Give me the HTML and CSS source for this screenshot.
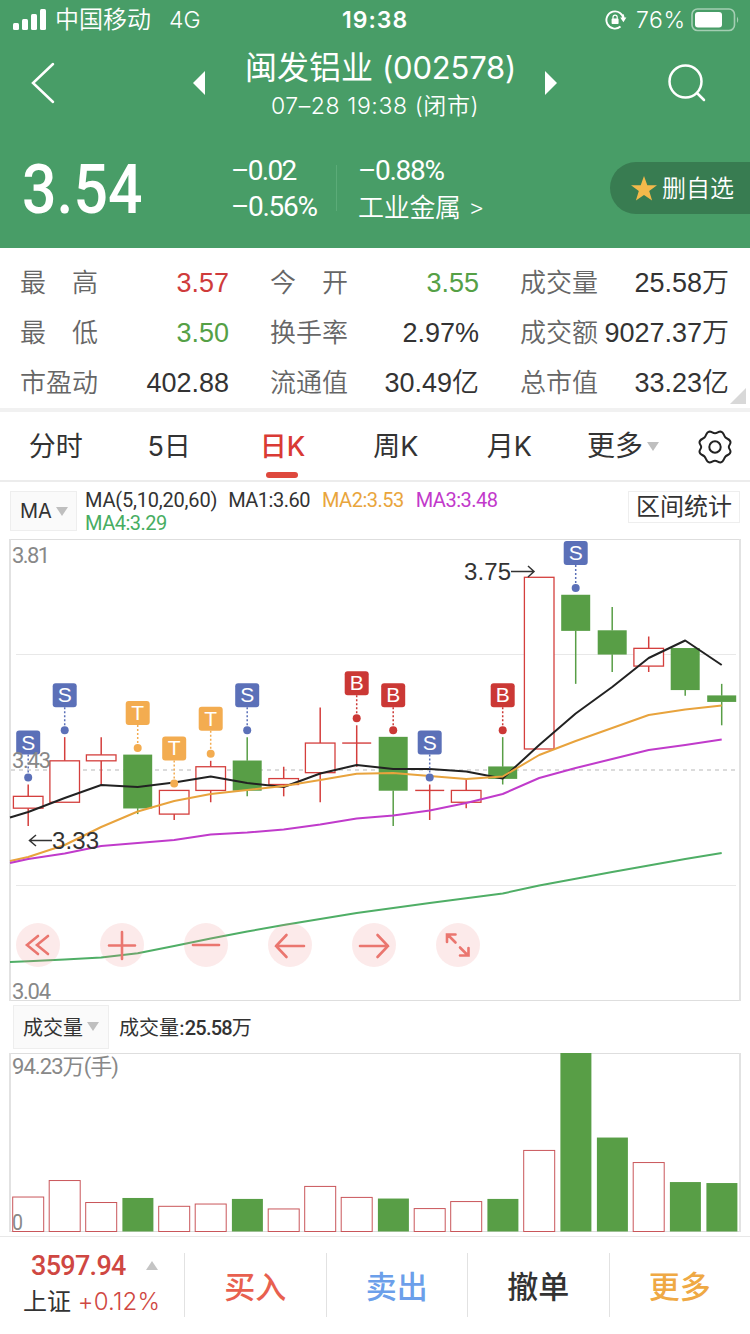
FILE: index.html
```html
<!DOCTYPE html>
<html lang="zh-CN">

<head>
    <meta charset="UTF-8">
    <title>闽发铝业 (002578)</title>
    <link rel="stylesheet" href="styles.css">
</head>

<body>

    <div class="header">
        <div class="status">
            <svg class="signal" width="34" height="22" viewBox="0 0 34 22">
                <rect x="0" y="14" width="6" height="7" rx="1.5"/>
                <rect x="9" y="10" width="6" height="11" rx="1.5"/>
                <rect x="18" y="5" width="6" height="16" rx="1.5"/>
                <rect x="27" y="0" width="6" height="21" rx="1.5"/>
            </svg>
            <span class="carrier">中国移动</span>
            <span class="net">4G</span>
            <span class="time">19:38</span>
            <svg class="lock" width="22" height="22" viewBox="0 0 22 22">
                <path d="M18.6 10.5A8.6 8.6 0 1 0 15.5 17.6M17.6 5.5A8.6 8.6 0 0 1 18.6 10.5" fill="none" stroke="#fff" stroke-width="1.9"/>
                <path d="M15.2 8.6h6.2l-3 4.6z"/>
                <rect x="6.6" y="9.6" width="7" height="5.4" rx=".8"/>
                <path d="M8 10V8.2a2.1 2.1 0 0 1 4.2 0V10" fill="none" stroke="#fff" stroke-width="1.2"/>
            </svg>
            <span class="percent">76%</span>
            <svg class="battery" width="50" height="24" viewBox="0 0 50 24">
                <rect x="1" y="1" width="42.5" height="21.5" rx="5.5" fill="none" stroke="#fff" stroke-opacity=".5" stroke-width="1.6"/>
                <rect x="4" y="4" width="27" height="15.5" rx="3"/>
                <path d="M46 8.5q2.5 3.3 0 6.6z" opacity=".5"/>
            </svg>
        </div>

        <div class="nav">
            <svg class="back" width="24" height="42" viewBox="0 0 24 42"><path d="M22 2L2 21L22 40" fill="none" stroke="#fff" stroke-width="2.5" stroke-linecap="round"/></svg>
            <svg class="prev" width="12" height="24" viewBox="0 0 12 24"><path d="M12 0v24L0 12z"/></svg>
            <div class="title">
                <h1>闽发铝业 <span>(002578)</span></h1>
                <p>07–28 19:38 (闭市)</p>
            </div>
            <svg class="next" width="12" height="24" viewBox="0 0 12 24"><path d="M0 0v24L12 12z"/></svg>
            <svg class="search" width="38" height="38" viewBox="0 0 38 38"><path d="M29 29l7 7M33.5 17.5a16 16 0 1 1-32 0a16 16 0 1 1 32 0z" fill="none" stroke="#fff" stroke-width="2.5" stroke-linecap="round"/></svg>
        </div>

        <div class="quote">
            <div class="price">3.54</div>
            <div class="change">
                <p>–0.02</p>
                <p>–0.56%</p>
            </div>
            <div class="industry">
                <p class="num">–0.88%</p>
                <p class="name">工业金属 <span>&gt;</span></p>
            </div>
            <div class="fav">
                <svg width="26" height="25" viewBox="0 0 26 25"><path d="M13 0l3.3 9.2h9.7l-7.8 5.9 2.9 9.4L13 18.9l-8.1 5.6 2.9-9.4L0 9.2h9.7z" fill="#f3b94b"/></svg>
                <span>删自选</span>
            </div>
        </div>
    </div>

    <div class="stats">
        <div><label>最　高</label><b class="up">3.57</b></div>
        <div><label>今　开</label><b class="down">3.55</b></div>
        <div><label>成交量</label><b>25.58万</b></div>
        <div><label>最　低</label><b class="down">3.50</b></div>
        <div><label>换手率</label><b>2.97%</b></div>
        <div><label>成交额</label><b>9027.37万</b></div>
        <div><label>市盈动</label><b>402.88</b></div>
        <div><label>流通值</label><b>30.49亿</b></div>
        <div><label>总市值</label><b>33.23亿</b></div>
        <i class="corner"></i>
    </div>

    <div class="tabs">
        <div>分时</div>
        <div>5日</div>
        <div class="active">日K</div>
        <div>周K</div>
        <div>月K</div>
        <div class="more">更多<i class="caret"></i></div>
        <svg class="gear" width="34" height="34" viewBox="-17 -17 34 34">
            <circle r="5.7"/>
            <path d="M-5.5-15.500C-3-15.500-2.500-13.700 0-13.700S3-15.500 5.500-15.500C9-15 8.500-11.500 10.500-9.500S15.500-8 15.500-4.500C15.500-2.500 13.800-2 13.800 0S15.500 2.500 15.500 4.500C15.500 8 12.500 7.500 10.500 9.500S9 15 5.500 15.500C3 15.500 2.500 13.700 0 13.700S-3 15.500-5.500 15.500C-9 15-8.500 11.500-10.500 9.500S-15.500 8-15.500 4.500C-15.500 2.500-13.800 2-13.800 0S-15.500-2.500-15.500-4.500C-15.500-8-12.500-7.500-10.500-9.500S-9-15-5.500-15.500Z"/>
        </svg>
    </div>

    <div class="ma">
        <div class="select">MA<i class="caret"></i></div>
        <p>
            <span class="m0">MA(5,10,20,60)</span><span class="m1">MA1:3.60</span><span class="m2">MA2:3.53</span><span class="m3">MA3:3.48</span><br><span class="m4">MA4:3.29</span>
        </p>
        <div class="range">区间统计</div>
    </div>

    <div class="chart">
        <svg id="kline" width="750" height="464" viewBox="0 538 750 464"></svg>
        <div class="tools">
            <svg viewBox="-22 -22 44 44"><path d="M0-9L-11 0L0 9M10-9L-1 0L10 9"/></svg>
            <svg viewBox="-22 -22 44 44"><path d="M-13 .5H13M0-13V14"/></svg>
            <svg viewBox="-22 -22 44 44"><path d="M-13 0H13"/></svg>
            <svg viewBox="-22 -22 44 44"><path d="M14 1H-14M-3.5-10L-14 1L-3.5 12"/></svg>
            <svg viewBox="-22 -22 44 44"><path d="M-14 1H14M3.5-10L14 1L3.5 12"/></svg>
            <svg viewBox="-22 -22 44 44"><path d="M-2.500-2.500L-10-10M-11-3V-10.500H-2.500M2 2.500L9.500 10M10.500 3V10.500H2"/></svg>
        </div>
    </div>

    <div class="vol-head">
        <div class="select">成交量<i class="caret"></i></div>
        <p>成交量:<span>25.58</span>万</p>
    </div>
    <svg id="volume" width="750" height="181" viewBox="0 1052 750 181"></svg>

    <div class="footer">
        <div class="index">
            <p class="point">3597.94<i></i></p>
            <p class="rate">上证 <span>+0.12%</span></p>
        </div>
        <div class="btn buy">买入</div>
        <div class="btn sell">卖出</div>
        <div class="btn cancel">撤单</div>
        <div class="btn other">更多</div>
    </div>

    <script>
        // 开, 收, 高, 低, 量, 买卖点
        var days = [
            [3.36, 3.38, 3.40, 3.33, 18.2, 'S'],
            [3.37, 3.44, 3.48, 3.37, 26.9, 'S'],
            [3.44, 3.45, 3.48, 3.40, 15.3],
            [3.45, 3.36, 3.45, 3.35, 17.7, 'T'],
            [3.35, 3.39, 3.39, 3.34, 13.3, 'T'],
            [3.39, 3.43, 3.44, 3.37, 14.5, 'T'],
            [3.44, 3.39, 3.48, 3.38, 17.2, 'S'],
            [3.40, 3.41, 3.43, 3.38, 11.9],
            [3.42, 3.47, 3.53, 3.37, 23.8],
            [3.47, 3.47, 3.50, 3.43, 18.0, 'B'],
            [3.48, 3.39, 3.48, 3.33, 17.4, 'B'],
            [3.39, 3.39, 3.40, 3.34, 12.1, 'S'],
            [3.37, 3.39, 3.41, 3.36, 15.8],
            [3.43, 3.41, 3.48, 3.40, 17.2, 'B'],
            [3.46, 3.75, 3.75, 3.46, 42.8],
            [3.72, 3.66, 3.72, 3.57, 94.23, 'S'],
            [3.66, 3.62, 3.70, 3.59, 49.6],
            [3.60, 3.63, 3.65, 3.59, 36.4],
            [3.63, 3.56, 3.63, 3.55, 26.1],
            [3.55, 3.54, 3.57, 3.50, 25.58]
        ];
        // 均线, 第一个点在左边框上
        var lines = {
            '#222222': [817.5, 812, 798, 785, 787, 782.5, 776.5, 783, 787, 773.5, 765, 769, 769, 771.5, 778.5, 745, 713.5, 687, 658, 640.5, 665],
            '#e8a33d': [861, 857, 845, 827, 811.5, 801, 794, 790, 786, 780, 773.7, 773, 776, 779, 776.5, 755, 741, 728, 715, 709.5, 705.5],
            '#c03bcb': [863, 859, 853.5, 846, 843, 840, 834.5, 832.5, 829.5, 824.5, 818.5, 815.5, 810.5, 803, 794, 778, 768, 759, 750, 745, 739.5],
            '#4fae66': [962, 961.3, 959.5, 957.5, 953.3, 946, 938.5, 931.5, 925, 919, 913, 908, 903, 898.3, 893.5, 885.5, 878.8, 872, 865.5, 859, 853]
        };
        var colors = { S: '#5b70b8', T: '#f3ac50', B: '#cb3835' };
        var red = '#d43f3d', green = '#589e46';

        function px(i) { return 28.2 + 36.5 * i; }
        function py(p) { return 577.3 + (3.75 - p) * 592; }
        function line(x1, y1, x2, y2, c, rest) {
            return '<line x1="' + x1 + '" y1="' + y1 + '" x2="' + x2 + '" y2="' + y2 + '" stroke="' + c + '" ' + (rest || '') + '/>';
        }

        var k = '<path d="M10 539.5H740M10 1000.5H740" stroke="#dedede"/>' +
            '<path d="M10 539V1001M740 539V1001" stroke="#e2e2e2" stroke-width="2"/>' +
            '<path d="M16 654.5H736M16 885.5H736" stroke="#e8e8e8"/>' +
            line(11, 770, 739, 770, '#cfcfcf', 'stroke-width="1.5" stroke-dasharray="4 4"');
        var v = '<path d="M10 1053.5H740M10 1231.5H740" stroke="#dedede"/>' +
            '<path d="M10 1053V1232M740 1053V1232" stroke="#e2e2e2" stroke-width="2"/>';
        var marks = '';

        days.forEach(function (d, i) {
            var x = px(i), top = py(Math.max(d[0], d[1])), bottom = py(Math.min(d[0], d[1]));
            var up = d[1] >= d[0], c = up ? red : green;
            k += line(x, py(d[2]), x, top, c, 'stroke-width="1.5"') + line(x, bottom, x, py(d[3]), c, 'stroke-width="1.5"');
            if (d[0] === d[1]) {
                k += line(x - 14.5, top, x + 14.5, top, c, 'stroke-width="1.4"');
            } else if (up) {
                k += '<rect x="' + (x - 14.8) + '" y="' + top + '" width="29.6" height="' + (bottom - top) + '" fill="#fff" stroke="' + c + '" stroke-width="1.3"/>';
            } else {
                k += '<rect x="' + (x - 14.5) + '" y="' + (top - .3) + '" width="29" height="' + (bottom - top + .6) + '" fill="' + c + '"/>';
            }

            var h = d[4] / 94.23 * 178.5;
            v += up
                ? '<rect x="' + (x - 15.5) + '" y="' + (1231.5 - h) + '" width="31" height="' + h + '" fill="#fff" stroke="#c9565a"/>'
                : '<rect x="' + (x - 15.3) + '" y="' + (1231.5 - h) + '" width="31" height="' + h + '" fill="' + green + '"/>';

            if (d[5]) {
                var m = colors[d[5]], y = py(d[2]) - 7;
                marks += line(x, y - 23, x, y - 4, m, 'stroke-width="1.5" stroke-dasharray="2 2"') +
                    '<circle cx="' + x + '" cy="' + y + '" r="4" fill="' + m + '"/>' +
                    '<rect x="' + (x - 12) + '" y="' + (y - 47) + '" width="24" height="24" rx="3" fill="' + m + '"/>' +
                    '<text class="mark" x="' + x + '" y="' + (y - 28) + '">' + d[5] + '</text>';
            }
        });

        for (var c in lines) {
            k += '<polyline fill="none" stroke-width="2" stroke-linejoin="round" stroke="' + c + '" points="' +
                lines[c].map(function (y, i) { return (i ? px(i - 1) : 10) + ',' + y; }).join(' ') + '"/>';
        }

        k += marks +
            '<text class="axis" x="12" y="563" textLength="38">3.81</text>' +
            '<text class="axis" x="12" y="768" textLength="39">3.43</text>' +
            '<text class="axis" x="12" y="998.5" textLength="39">3.04</text>' +
            '<text class="peak" x="52" y="849" textLength="47">3.33</text>' +
            '<text class="peak" x="464" y="580" textLength="47">3.75</text>' +
            '<path d="M52 840.5H30M36 835L29.5 840.5L36 846M511 571.5H533M528 566L534 571.5L528 577" fill="none" stroke="#333" stroke-width="1.5"/>';
        v += '<text class="axis" x="12" y="1074" textLength="107">94.23万(手)</text><text class="axis" x="12" y="1229.5" textLength="11" lengthAdjust="spacingAndGlyphs">0</text>';

        document.getElementById('kline').innerHTML = k;
        document.getElementById('volume').innerHTML = v;
    </script>

</body>

</html>
```
FILE: styles.css
```css
* {
    box-sizing: border-box;
}

body {
    margin: 0;
    width: 750px;
    height: 1334px;
    overflow: hidden;
    background: #fff;
    color: #333;
    font-family: Inter, "Noto Sans CJK SC", sans-serif;
}

p, h1 {
    margin: 0;
    font-weight: normal;
    white-space: nowrap;
}

svg {
    display: block;
    flex: none;
}

.header {
    height: 248px;
    background: #489d67;
    color: #fff;
    fill: #fff;
}

/* 状态栏 */
.status {
    display: flex;
    align-items: center;
    height: 40px;
    padding-left: 13px;
    font-size: 23px;
    line-height: 42px;
    font-weight: 350;
}

.carrier {
    width: 96px;
    margin-left: 8px;
    font-size: 24px;
    line-height: 44px;
    white-space: nowrap;
}

.net {
    width: 34px;
    margin-left: 18px;
}

.time {
    width: 72px;
    margin-left: 139px;
    font-size: 23px;
    font-weight: 600;
    letter-spacing: 1px;
}

.lock {
    margin-left: 191px;
}

.percent {
    width: 51px;
    margin-left: 9px;
    letter-spacing: 0.6px;
}

.battery {
    margin-left: 4px;
}

/* 标题 */
.nav {
    display: flex;
    align-items: center;
    height: 86px;
    padding: 0 44px 0 31px;
}

.prev {
    margin-left: 138px;
}

.title {
    width: 272px;
    margin: 0 auto;
    text-align: center;
}

.title h1 {
    height: 46px;
    padding-left: 6px;
    font-size: 32px;
    line-height: 47px;
}

.title h1 span {
    font-size: 31px;
    letter-spacing: -0.2px;
}

.title p {
    height: 32px;
    font-size: 23px;
    line-height: 32px;
    font-weight: 350;
    letter-spacing: 0.6px;
}

.next {
    margin-right: 111px;
}

/* 报价 */
.quote {
    display: flex;
    height: 122px;
    padding-top: 26px;
    font-family: Roboto, "Noto Sans CJK SC", sans-serif;
}

.price {
    width: 209px;
    margin-left: 22px;
    font-size: 69px;
    line-height: 76px;
    font-weight: 500;
    transform: scaleX(0.88);
    transform-origin: 0 0;
}

.change {
    width: 106px;
    height: 46px;
    margin-top: 13px;
    border-right: 1px solid #5bab78;
}

.change p, .industry p {
    height: 36px;
    margin-top: -12px;
    margin-bottom: 12px;
    font-size: 28px;
    line-height: 36px;
    letter-spacing: -1.3px;
}

.change p:first-child {
    letter-spacing: -1.7px;
}

.industry {
    width: 273px;
    margin-top: 13px;
    padding-left: 21px;
}

.industry .name {
    font-size: 26px;
    font-weight: 350;
    letter-spacing: -0.3px;
    line-height: 38px;
}

.name span {
    margin-left: 3px;
}

.fav {
    display: flex;
    align-items: center;
    width: 140px;
    height: 52px;
    margin-top: 10px;
    padding-left: 21px;
    border-radius: 26px 0 0 26px;
    background: #387c51;
    font-size: 24px;
    font-weight: 350;
}

.fav span {
    margin: -3px 0 0 5px;
    white-space: nowrap;
}

/* 行情数据 */
.stats {
    position: relative;
    display: grid;
    grid-template-columns: repeat(3, 209px);
    grid-auto-rows: 50px;
    column-gap: 41px;
    height: 164px;
    padding: 9px 20px 0;
    border-bottom: 4px solid #f1f1f1;
    font-family: "Liberation Sans", "Noto Sans CJK SC", sans-serif;
    font-size: 26px;
    line-height: 52px;
}

.stats div {
    display: flex;
    justify-content: space-between;
    white-space: nowrap;
}

.stats label {
    color: #666;
    font-weight: 350;
}

.stats b {
    font-size: 27px;
    font-weight: 350;
}

.stats .up {
    color: #cf3b3b;
}

.stats .down {
    color: #55a046;
}

.corner {
    position: absolute;
    right: 4px;
    bottom: 4px;
    border-left: 16px solid transparent;
    border-bottom: 16px solid #d8d8d8;
}

.caret {
    display: inline-block;
    border: 6px solid transparent;
    border-top: 9px solid #bfbfbf;
    border-bottom: 0;
}

/* 周期 */
.tabs {
    display: flex;
    align-items: center;
    height: 70px;
    border-bottom: 2px solid #ececec;
    font-size: 27px;
    line-height: 75px;
}

.tabs div {
    position: relative;
    left: -1px;
    width: 113.4px;
    text-align: center;
    white-space: nowrap;
}

.tabs .active {
    color: #d93a35;
    font-weight: 500;
}

.tabs .active::after {
    content: "";
    position: absolute;
    left: 40px;
    bottom: 6px;
    width: 32px;
    height: 6px;
    border-radius: 3px;
    background: #de483d;
}

.tabs .more {
    left: 0;
    width: 131px;
    padding-left: 20px;
    text-align: left;
    font-size: 28px;
}

.more .caret {
    margin: 0 0 5px 4px;
}

.gear {
    margin-top: 2px;
    fill: none;
    stroke: #222;
    stroke-width: 2;
}

/* 均线 */
.ma {
    display: flex;
    height: 56px;
    padding: 9px 10px 0;
}

.select {
    display: flex;
    align-items: center;
    height: 40px;
    border: 1px solid #eee;
    background: #fafafa;
    white-space: nowrap;
}

.ma .select {
    width: 67px;
    padding-left: 9px;
    font-size: 20px;
}

.select .caret {
    margin-left: 4px;
}

.ma p {
    width: 551px;
    padding-left: 8px;
    font: 20px/23px Roboto, sans-serif;
    letter-spacing: -0.5px;
    margin-top: -2px;
}

.ma p span {
    margin-right: 12px;
}

.ma p .m0 {
    margin-right: 11px;
    letter-spacing: -0.2px;
}

.m2 {
    color: #e9a53c;
}

.m3 {
    color: #c239cb;
}

.m4 {
    color: #47ad62;
}

.range {
    width: 112px;
    height: 32px;
    border: 1px solid #eee;
    font-size: 24px;
    line-height: 30px;
    text-align: center;
    white-space: nowrap;
}

.chart {
    position: relative;
}

.tools {
    position: absolute;
    left: 16px;
    top: 385px;
    display: flex;
    gap: 40px;
}

.tools svg {
    width: 44px;
    height: 44px;
    border-radius: 50%;
    background: rgba(240, 140, 140, 0.18);
    fill: none;
    stroke: #ea766f;
    stroke-width: 2.6;
    stroke-linecap: round;
}

.axis {
    font: 22px Roboto, "Noto Sans CJK SC", sans-serif;
    fill: #888;
}

.peak {
    font: 24px "Liberation Sans", sans-serif;
    fill: #333;
}

.mark {
    font: 21px "Liberation Sans", sans-serif;
    fill: #fff;
    text-anchor: middle;
}

/* 成交量 */
.vol-head {
    display: flex;
    align-items: center;
    height: 50px;
    padding: 0 13px;
    font-size: 20px;
}

.vol-head .select {
    width: 96px;
    height: 44px;
    padding: 0 0 1px 9px;
}

.vol-head p {
    margin: -1px 0 0 10px;
}

.vol-head span {
    font: 500 20px Roboto, sans-serif;
    letter-spacing: -0.8px;
}

/* 底部 */
.footer {
    display: flex;
    height: 98px;
    margin-top: 3px;
    padding-top: 16px;
    border-top: 1px solid #e8e8e8;
}

.index {
    width: 184px;
}

.point {
    height: 26px;
    padding-left: 31px;
    color: #cf4742;
    font: 500 27px/26px Roboto, sans-serif;
    letter-spacing: -0.7px;
}

.point i {
    display: inline-block;
    margin: 0 0 5px 20px;
    border: 6px solid transparent;
    border-bottom: 9px solid #c4c4c4;
    border-top: 0;
}

.rate {
    height: 44px;
    padding-left: 23px;
    font-size: 24px;
    line-height: 46px;
}

.rate span {
    color: #cf4742;
    font-size: 24px;
    font-weight: 350;
    letter-spacing: 0.2px;
}

.btn {
    flex: 1;
    height: 64px;
    border-left: 1px solid #e2e2e2;
    font-size: 31px;
    line-height: 68px;
    font-weight: 500;
    text-align: center;
}

.buy {
    color: #e8604f;
}

.sell {
    color: #6c9fea;
}

.other {
    color: #efa944;
}
```
